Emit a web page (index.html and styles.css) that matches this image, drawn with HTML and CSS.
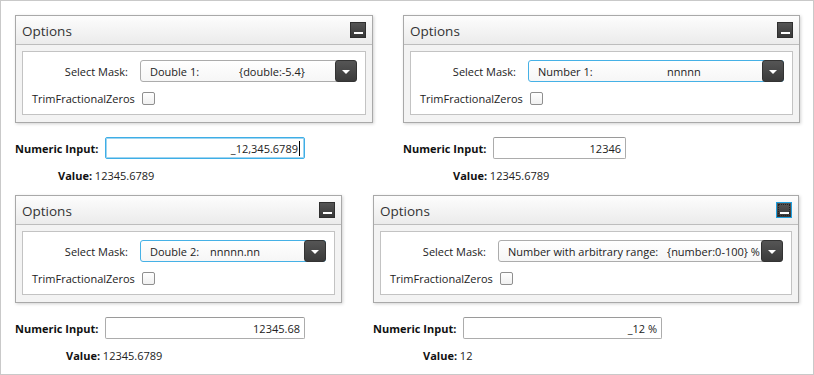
FILE: index.html
```html
<!DOCTYPE html>
<html lang="en">
<head>
    <meta charset="UTF-8">
    <title>Numeric Input Masks</title>
    <link rel="stylesheet" href="styles.css">
</head>
<body>
    <div class="frame">
        <!-- Верхний ряд -->
        <div class="row">
            <div class="cell cell-a">
                <div class="panel panel-a">
                    <div class="panel-header">
                        <span class="panel-title">Options</span>
                        <span class="min-btn"><span class="min-bar"></span></span>
                    </div>
                    <div class="panel-body">
                        <div class="form-box">
                            <span class="lbl">Select Mask:</span>
                            <div class="combo">
                                <span class="combo-name name-a">Double 1:</span>
                                <span class="combo-mask">{double:-5.4}</span>
                                <span class="combo-btn"><span class="arrow"></span></span>
                            </div>
                            <span class="lbl">TrimFractionalZeros</span>
                            <span class="check"></span>
                        </div>
                    </div>
                </div>
                <div class="input-row">
                    <span class="input-label">Numeric Input:</span>
                    <div class="num-input num-a focused">_12,345.6789<span class="caret"></span></div>
                </div>
                <div class="value-row value-a"><b>Value:</b> 12345.6789</div>
            </div>

            <div class="cell cell-b">
                <div class="panel panel-b">
                    <div class="panel-header">
                        <span class="panel-title">Options</span>
                        <span class="min-btn"><span class="min-bar"></span></span>
                    </div>
                    <div class="panel-body">
                        <div class="form-box">
                            <span class="lbl">Select Mask:</span>
                            <div class="combo focused">
                                <span class="combo-name name-b">Number 1:</span>
                                <span class="combo-mask">nnnnn</span>
                                <span class="combo-btn"><span class="arrow"></span></span>
                            </div>
                            <span class="lbl">TrimFractionalZeros</span>
                            <span class="check"></span>
                        </div>
                    </div>
                </div>
                <div class="input-row">
                    <span class="input-label">Numeric Input:</span>
                    <div class="num-input num-b">12346</div>
                </div>
                <div class="value-row value-b"><b>Value:</b> 12345.6789</div>
            </div>
        </div>

        <!-- Нижний ряд -->
        <div class="row">
            <div class="cell cell-c">
                <div class="panel panel-c">
                    <div class="panel-header">
                        <span class="panel-title">Options</span>
                        <span class="min-btn"><span class="min-bar"></span></span>
                    </div>
                    <div class="panel-body">
                        <div class="form-box">
                            <span class="lbl">Select Mask:</span>
                            <div class="combo focused">
                                <span class="combo-name name-c">Double 2:</span>
                                <span class="combo-mask">nnnnn.nn</span>
                                <span class="combo-btn"><span class="arrow"></span></span>
                            </div>
                            <span class="lbl">TrimFractionalZeros</span>
                            <span class="check"></span>
                        </div>
                    </div>
                </div>
                <div class="input-row">
                    <span class="input-label">Numeric Input:</span>
                    <div class="num-input num-c">12345.68</div>
                </div>
                <div class="value-row value-c"><b>Value:</b> 12345.6789</div>
            </div>

            <div class="cell cell-d">
                <div class="panel panel-d">
                    <div class="panel-header">
                        <span class="panel-title">Options</span>
                        <span class="min-btn focused"><span class="min-bar"></span></span>
                    </div>
                    <div class="panel-body">
                        <div class="form-box">
                            <span class="lbl">Select Mask:</span>
                            <div class="combo">
                                <span class="combo-name name-d">Number with arbitrary range:</span>
                                <span class="combo-mask">{number:0-100} %</span>
                                <span class="combo-btn"><span class="arrow"></span></span>
                            </div>
                            <span class="lbl">TrimFractionalZeros</span>
                            <span class="check"></span>
                        </div>
                    </div>
                </div>
                <div class="input-row">
                    <span class="input-label">Numeric Input:</span>
                    <div class="num-input num-d">_12 %</div>
                </div>
                <div class="value-row value-d"><b>Value:</b> 12</div>
            </div>
        </div>
    </div>
</body>
</html>
```

FILE: styles.css
```css
body {
    margin: 0;
    font-family: "Open Sans", "Noto Sans", sans-serif;
    font-size: 11px;
    color: #1e1e1e;
    background-color: #fff;
}

.frame {
    width: 814px;
    height: 375px;
    box-sizing: border-box;
    border: 1px solid #c9c9c9;
    padding-top: 14px;
}

.row {
    display: flex;
    height: 180px;
}

.cell {
    display: flex;
    flex-direction: column;
}

.cell-a { margin-left: 14px; }
.cell-b { margin-left: 30px; }
.cell-c { margin-left: 14px; }
.cell-d { margin-left: 31px; }

/* Панель Options */
.panel {
    height: 108px;
    box-sizing: border-box;
    border: 1px solid #a9a9a9;
    background-color: #f3f3f3;
    box-shadow: 1px 1px 3px rgba(0, 0, 0, 0.18);
    display: flex;
    flex-direction: column;
}

.panel-a { width: 358px; }
.panel-b { width: 397px; }
.panel-c { width: 327px; }
.panel-d { width: 426px; }

.panel-header {
    height: 28px;
    border-bottom: 1px solid #bdbdbd;
    background: linear-gradient(to bottom, #fdfdfd, #ebebeb);
    display: flex;
    align-items: center;
    justify-content: space-between;
    padding: 0 6px;
}

.panel-title {
    font-size: 13.5px;
    color: #333;
    margin-top: 2px;
}

.min-btn {
    width: 16px;
    height: 16px;
    box-sizing: border-box;
    background: linear-gradient(to bottom, #555, #383838);
    border: 1px solid #2f2f2f;
    display: flex;
    justify-content: center;
    align-items: flex-end;
    padding-bottom: 3px;
}

.min-btn.focused {
    border: 1px solid #1ea0e0;
    outline: 1px dotted #222;
    outline-offset: -3px;
}

.min-bar {
    width: 9px;
    height: 2px;
    background-color: #fff;
}

.panel-body {
    flex: 1;
    padding: 6px 6px 7px;
}

.form-box {
    height: 64px;
    box-sizing: border-box;
    border: 1px solid #c3c3c3;
    background-color: #fff;
    display: grid;
    grid-template-columns: 96px 1fr;
    grid-template-rows: 22px 13px;
    row-gap: 10px;
    column-gap: 12px;
    align-items: center;
    padding: 8px 8px 0 9px;
}

.lbl {
    text-align: right;
    color: #222;
    white-space: nowrap;
}

/* Выпадающий список */
.combo {
    height: 22px;
    box-sizing: border-box;
    border: 1px solid #acacac;
    border-radius: 3px;
    background: linear-gradient(to bottom, #fff, #f6f6f6);
    display: flex;
    align-items: center;
    padding-left: 9px;
    position: relative;
    white-space: nowrap;
    color: #222;
}

.combo.focused {
    border-color: #46b1e6;
}

.combo-name { flex-shrink: 0; }
.name-a { width: 89px; }
.name-b { width: 129px; }
.name-c { width: 60px; }
.name-d { width: 159px; }

.combo-btn {
    position: absolute;
    right: -1px;
    top: -1px;
    width: 22px;
    height: 22px;
    border-radius: 3px;
    background: linear-gradient(to bottom, #555, #3a3a3a);
    border: 1px solid #333;
    box-sizing: border-box;
    display: flex;
    justify-content: center;
    align-items: center;
}

.arrow {
    width: 0;
    height: 0;
    border-left: 4px solid transparent;
    border-right: 4px solid transparent;
    border-top: 4px solid #fff;
    margin-top: 1px;
}

.check {
    width: 13px;
    height: 13px;
    box-sizing: border-box;
    border: 1px solid #8f8f8f;
    border-radius: 2px;
    background: linear-gradient(to bottom, #fff, #f0f0f0);
    margin-left: 2px;
}

/* Поле ввода */
.input-row {
    display: flex;
    align-items: center;
    margin-top: 14px;
    height: 22px;
}

.input-label {
    font-weight: bold;
    width: 90px;
    white-space: nowrap;
    color: #111;
}

.num-input {
    height: 22px;
    box-sizing: border-box;
    border: 1px solid #acacac;
    border-top-color: #9a9a9a;
    border-radius: 2px;
    display: flex;
    align-items: center;
    justify-content: flex-end;
    padding-right: 4px;
    color: #222;
}

.num-input.focused {
    border: 1px solid #3eaee6;
    box-shadow: inset 0 0 0 1px #9fd5f1;
}

.num-a { width: 200px; }
.num-b { width: 133px; }
.num-c { width: 200px; }
.num-d { width: 199px; }

.caret {
    width: 1px;
    height: 15px;
    background-color: #000;
    margin-left: 1px;
}

.value-row {
    margin-top: 8px;
    line-height: 18px;
    color: #222;
}

.value-row b { color: #111; }

.value-a { margin-left: 43px; }
.value-b { margin-left: 50px; }
.value-c { margin-left: 51px; }
.value-d { margin-left: 50px; }
```
